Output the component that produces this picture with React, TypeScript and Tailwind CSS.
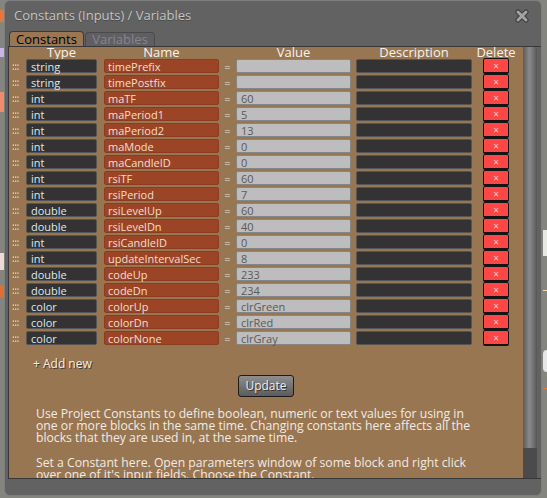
const rows: [string, string, string][] = [
  ["string", "timePrefix", ""],
  ["string", "timePostfix", ""],
  ["int", "maTF", "60"],
  ["int", "maPeriod1", "5"],
  ["int", "maPeriod2", "13"],
  ["int", "maMode", "0"],
  ["int", "maCandleID", "0"],
  ["int", "rsiTF", "60"],
  ["int", "rsiPeriod", "7"],
  ["double", "rsiLevelUp", "60"],
  ["double", "rsiLevelDn", "40"],
  ["int", "rsiCandleID", "0"],
  ["int", "updateIntervalSec", "8"],
  ["double", "codeUp", "233"],
  ["double", "codeDn", "234"],
  ["color", "colorUp", "clrGreen"],
  ["color", "colorDn", "clrRed"],
  ["color", "colorNone", "clrGray"],
];

function Handle() {
  return (
    <svg width="8" height="6" viewBox="0 0 8 6" className="ml-[3px] mt-[1px] shrink-0">
      {[0.7, 3, 5.3].map((x) =>
        [0.5, 4.5].map((y) => (
          <rect key={`${x}-${y}`} x={x} y={y} width="1.3" height="1.3" fill="#e6dfd4" />
        )),
      )}
    </svg>
  );
}

function CloseIcon() {
  return (
    <svg width="14" height="14" viewBox="0 0 14 14">
      <path d="M3 3 L11 11 M11 3 L3 11" stroke="#3c3c3c" strokeWidth="5" strokeLinecap="round" />
      <path d="M3 3 L11 11 M11 3 L3 11" stroke="#a3a3a3" strokeWidth="3" strokeLinecap="round" />
    </svg>
  );
}

export default function App() {
  return (
    <div className="relative w-[547px] h-[498px] overflow-hidden bg-[#858580] font-['Open_Sans',sans-serif]">
      {/* bits of the app behind the dialog */}
      <div className="absolute left-0 top-[10px] w-[4px] h-[12px] bg-[#e2783e]" />
      <div className="absolute left-0 top-[48px] w-[4px] h-[9px] bg-[#c9b6e6]" />
      <div className="absolute left-0 top-[92px] w-[4px] h-[20px] bg-[#ef8c6c]" />
      <div className="absolute left-0 top-[253px] w-[4px] h-[17px] bg-[#f0dad6]" />
      <div className="absolute left-0 top-[285px] w-[4px] h-[12px] bg-[#e07032]" />
      <div className="absolute right-0 top-[230px] w-[4px] h-[26px] bg-[#e8e8e2]" />
      <div className="absolute right-0 top-[290px] w-[4px] h-[1px] bg-[#f2d9b0]" />
      <div className="absolute right-0 top-[350px] w-[4px] h-[22px] rounded-l bg-[#e6e6e6]" />
      <div className="absolute right-0 top-[388px] w-[4px] h-[1px] bg-[#e47a30]" />

      <div className="ml-[4px] w-[538px] h-[496px] rounded-[6px] border border-[#7e7e7e] bg-[#626262] flex flex-col">
        <div className="h-[30px] flex items-center justify-between pl-[9px] pr-[12px]">
          <span className="text-[13px] text-[#c3c3c3] [text-shadow:0_1px_0_#4a4a4a]">
            Constants (Inputs) / Variables
          </span>
          <CloseIcon />
        </div>

        <div className="h-[15px] flex items-end pl-[4px]">
          <div className="w-[75px] h-[15px] rounded-t-[4px] border border-b-0 border-[#3a3a3a] bg-[#9a7652] text-[13px] leading-[14px] text-black text-center">
            Constants
          </div>
          <div className="ml-[1px] w-[70px] h-[14px] rounded-t-[4px] border border-b-0 border-[#4a4a4a] bg-[#5e5e63] text-[13px] leading-[13px] text-[#86868c] text-center">
            Variables
          </div>
        </div>

        <div className="ml-[3px] flex h-[433px] border-t border-b border-l border-[#383838]">
          <div className="w-[514px] h-full overflow-hidden bg-[#997652]">
            <div className="flex h-[11px] items-center text-[13px] leading-[11px] text-[#f6f3ee]">
              <div className="w-[11px]" />
              <div className="ml-[6px] w-[71px] text-center">Type</div>
              <div className="ml-[7px] w-[115px] text-center">Name</div>
              <div className="w-[17px]" />
              <div className="w-[115px] text-center">Value</div>
              <div className="ml-[5px] w-[116px] text-center">Description</div>
              <div className="ml-[11px] w-[26px] flex justify-center whitespace-nowrap">Delete</div>
            </div>

            {rows.map(([type, name, value]) => (
              <div key={name} className="flex h-[16px] items-center text-[11px] leading-none">
                <Handle />
                <div className="ml-[6px] w-[71px] h-[14px] flex items-center rounded-[2px] border border-[#555] bg-[#333] pl-[4px] text-[#dde8f2]">
                  {type}
                </div>
                <div className="ml-[7px] w-[115px] h-[14px] flex items-center rounded-[2px] border border-[#8c3c1f] bg-[#9b4526] pl-[3px] text-[#f3ddd0]">
                  {name}
                </div>
                <div className="w-[17px] text-center text-[#e8e2da]">=</div>
                <div className="w-[115px] h-[14px] flex items-center rounded-[2px] border border-[#858585] bg-[#bdbdbd] pl-[4px] text-[#5a5a5a]">
                  {value}
                </div>
                <div className="ml-[5px] w-[116px] h-[14px] rounded-[2px] border border-[#555] bg-[#333]" />
                <div className="ml-[11px] w-[26px] h-[16px] flex items-center justify-center rounded-[2px] border border-b-2 border-[#141414] bg-[#fd4747] text-[10px] text-[#f6cccc]">
                  ×
                </div>
              </div>
            ))}

            <div className="mt-[10px] h-[16px] pl-[24px] flex items-center text-[12px] text-[#f2efe9] [text-shadow:1px_1px_0_#3b3b3b]">
              + Add new
            </div>

            <div className="mt-[3px] flex justify-center">
              <button
                type="button"
                className="w-[56px] h-[22px] rounded-[3px] border border-[#1c1c1c] bg-[linear-gradient(#8e8e8e,#5c5c5c)] text-[12px] text-[#ececec] [text-shadow:1px_1px_0_#333]"
              >
                Update
              </button>
            </div>

            <div className="mt-[11px] ml-[27px] w-[452px] text-[12.2px] leading-[12px] text-[#f1ebe3]">
              <p>
                Use Project Constants to define boolean, numeric or text values for using in one or more blocks in
                the same time. Changing constants here affects all the blocks that they are used in, at the same time.
              </p>
              <p className="mt-[13px]">
                Set a Constant here. Open parameters window of some block and right click over one of it's input
                fields. Choose the Constant.
              </p>
            </div>
          </div>

          <div className="w-[14px] h-full flex flex-col">
            <div className="flex-1 rounded-t-[3px] bg-[linear-gradient(to_right,#5a5a5a,#8a8a8a_45%,#6c6c6c_80%,#555)]" />
            <div className="h-[30px] bg-[#4b4b4b]" />
          </div>
        </div>
      </div>
    </div>
  );
}
